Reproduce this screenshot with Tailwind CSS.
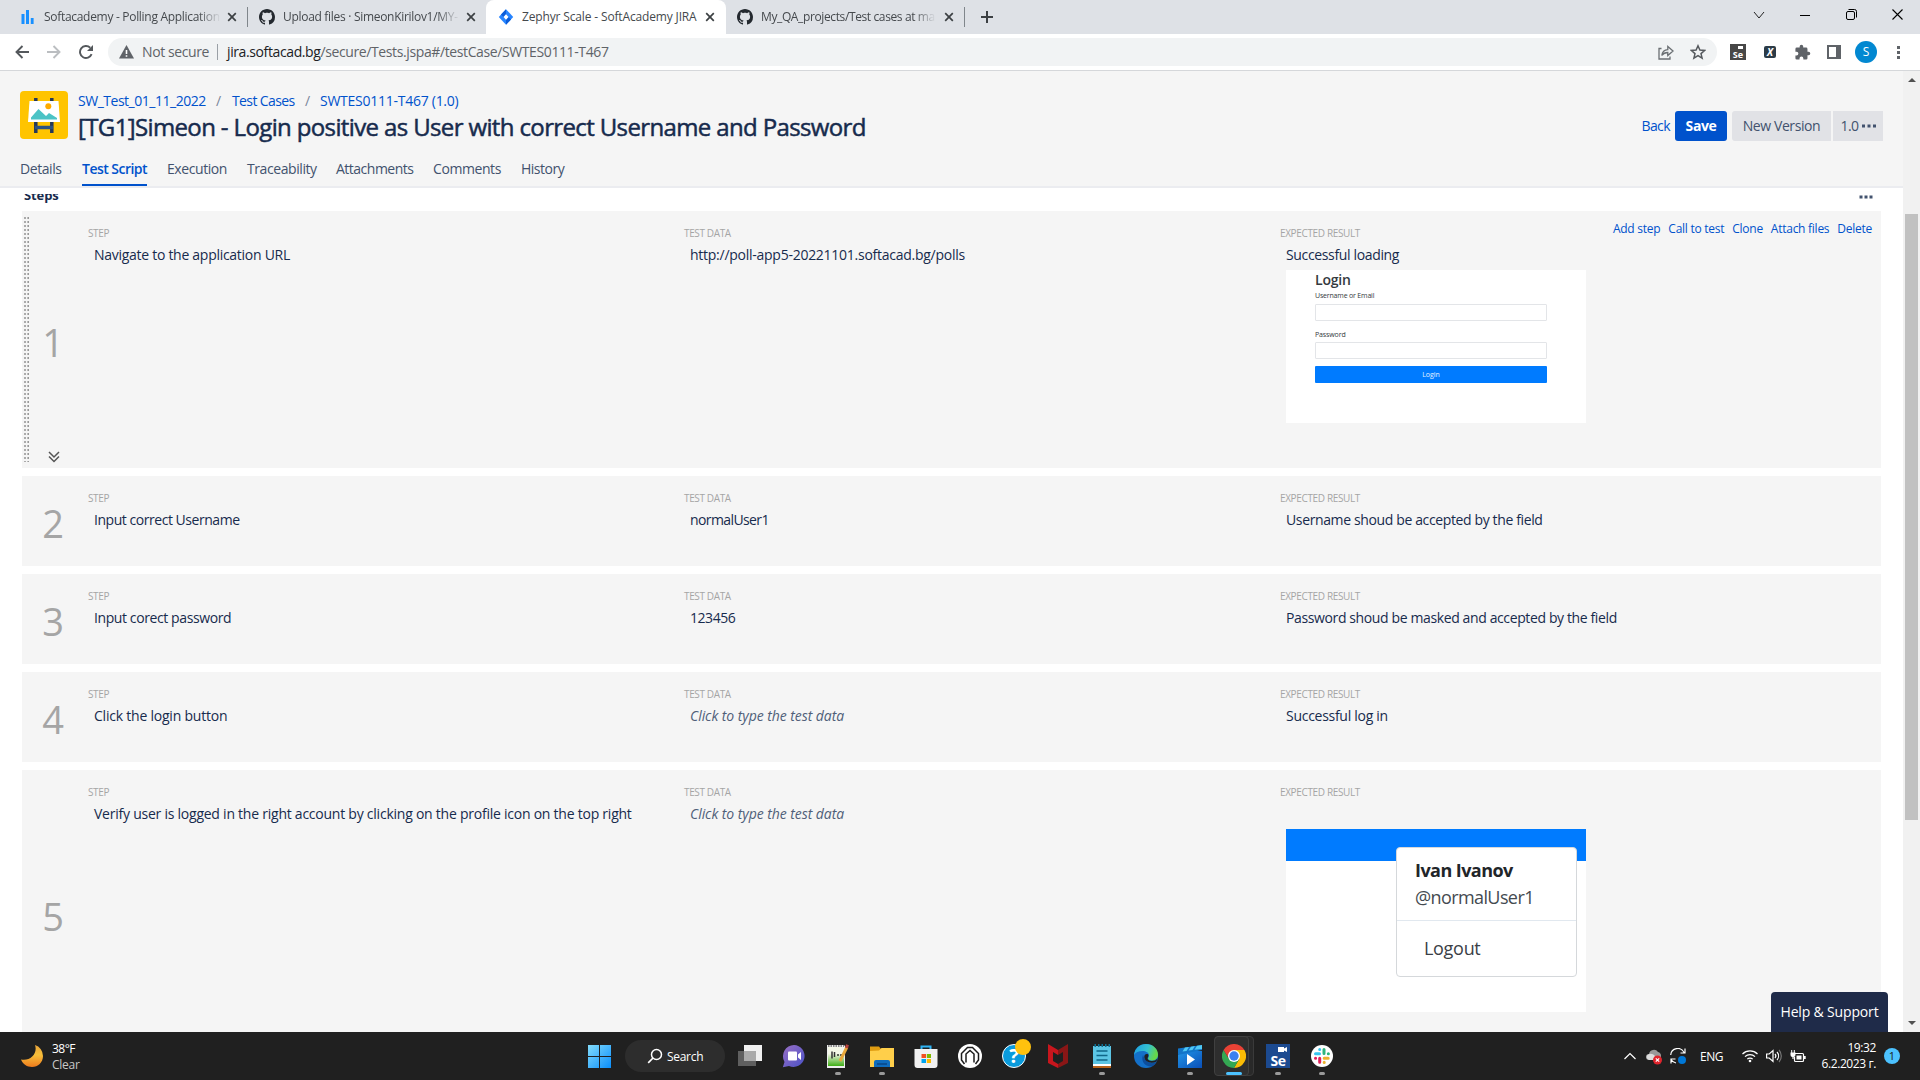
<!DOCTYPE html>
<html lang="en">
<head>
<meta charset="utf-8">
<title>Zephyr Scale - SoftAcademy JIRA</title>
<script src="https://cdn.jsdelivr.net/npm/@tailwindcss/browser@4"></script>
</head>
<body class="w-[1920px] h-[1080px] overflow-hidden flex flex-col bg-white font-['Open_Sans','Noto_Sans',sans-serif] text-sm text-[#172b4d] whitespace-nowrap">

<svg class="hidden">
  <symbol id="gh" viewBox="0 0 16 16"><path fill="#24292f" d="M8 0C3.58 0 0 3.58 0 8c0 3.54 2.29 6.53 5.47 7.59.4.07.55-.17.55-.38 0-.19-.01-.82-.01-1.49-2.01.37-2.53-.49-2.69-.94-.09-.23-.48-.94-.82-1.13-.28-.15-.68-.52-.01-.53.63-.01 1.08.58 1.23.82.72 1.21 1.87.87 2.33.66.07-.52.28-.87.51-1.07-1.78-.2-3.64-.89-3.64-3.95 0-.87.31-1.59.82-2.15-.08-.2-.36-1.02.08-2.12 0 0 .67-.21 2.2.82.64-.18 1.32-.27 2-.27s1.36.09 2 .27c1.53-1.04 2.2-.82 2.2-.82.44 1.1.16 1.92.08 2.12.51.56.82 1.27.82 2.15 0 3.07-1.87 3.75-3.65 3.95.29.25.54.73.54 1.48 0 1.07-.01 1.93-.01 2.2 0 .21.15.46.55.38A8.01 8.01 0 0 0 16 8c0-4.42-3.58-8-8-8z"/></symbol>
  <symbol id="x" viewBox="0 0 10 10"><path d="M1.2 1.2l7.6 7.6M8.8 1.2L1.2 8.8" stroke="#3c4043" stroke-width="1.7" fill="none"/></symbol>
</svg>

<!-- Tab strip -->
<header class="h-[34px] shrink-0 bg-[#dee1e6] flex text-xs text-[#45494d]">
  <div class="w-[247px] h-[34px] flex items-center pl-[21px]">
    <svg class="w-[13px] h-[14px] shrink-0" viewBox="0 0 13 14"><path fill="#1890ff" d="M.5 4h3v10h-3zM5 0h3v14H5zM9.8 8h2.8v6H9.8z"/></svg>
    <span class="ml-[10px] w-[177px] overflow-hidden tracking-[-0.3px] [mask-image:linear-gradient(to_right,black_87%,transparent)]">Softacademy - Polling Application</span>
    <svg class="ml-[6px] w-[10px] h-[10px]"><use href="#x"/></svg>
  </div>
  <div class="w-px h-[20px] mt-[7px] bg-[#80868b]"></div>
  <div class="w-[238px] h-[34px] flex items-center pl-[11px]">
    <svg class="w-4 h-4 shrink-0"><use href="#gh"/></svg>
    <span class="ml-2 w-[177px] overflow-hidden tracking-[-0.3px] [mask-image:linear-gradient(to_right,black_87%,transparent)]">Upload files · SimeonKirilov1/MY-</span>
    <svg class="ml-[6px] w-[10px] h-[10px]"><use href="#x"/></svg>
  </div>
  <div class="w-[240px] h-[34px] flex items-center pl-[12px] bg-white rounded-t-lg">
    <svg class="w-4 h-4 shrink-0" viewBox="0 0 16 16"><path fill="#2684ff" d="M8 .2L15.2 8 8 15.8.8 8z"/><path fill="#0b5cd8" d="M8 .2v5L5.6 8 3 5.500zM8 15.800v-5L10.400 8l2.600 2.500z"/><path fill="#fff" d="M8 5.300L10.500 8 8 10.700 5.500 8z"/></svg>
    <span class="ml-2 w-[178px] overflow-hidden tracking-[-0.15px]">Zephyr Scale - SoftAcademy JIRA</span>
    <svg class="ml-[5px] w-[10px] h-[10px]"><use href="#x"/></svg>
  </div>
  <div class="w-[238px] h-[34px] flex items-center pl-[11px]">
    <svg class="w-4 h-4 shrink-0"><use href="#gh"/></svg>
    <span class="ml-2 w-[175px] overflow-hidden tracking-[-0.38px] [mask-image:linear-gradient(to_right,black_87%,transparent)]">My_QA_projects/Test cases at ma</span>
    <svg class="ml-[8px] w-[10px] h-[10px]"><use href="#x"/></svg>
  </div>
  <div class="w-px h-[20px] mt-[7px] bg-[#80868b]"></div>
  <svg class="ml-[16px] mt-[11px] w-3 h-3" viewBox="0 0 12 12"><path d="M6 0v12M0 6h12" stroke="#3c4043" stroke-width="2"/></svg>
  <div class="ml-auto flex items-center h-[29px]">
    <div class="w-[46px] flex justify-center"><svg class="w-3 h-3" viewBox="0 0 12 12"><path d="M1 3l5 6 5-6" stroke="#222" fill="none"/></svg></div>
    <div class="w-[46px] flex justify-center"><svg class="w-[10px] h-3" viewBox="0 0 10 12"><path d="M0 6.500h10" stroke="#000"/></svg></div>
    <div class="w-[46px] flex justify-center"><svg class="w-[11px] h-[11px]" viewBox="0 0 11 11"><rect x=".5" y="2.500" width="8" height="8" rx="1.500" fill="none" stroke="#000"/><path d="M2.500.5H8.500a2 2 0 0 1 2 2V8.500" fill="none" stroke="#000"/></svg></div>
    <div class="w-[46px] flex justify-center"><svg class="w-[11px] h-[11px]" viewBox="0 0 11 11"><path d="M.5.5l10 10M10.500.5l-10 10" stroke="#000" stroke-width="1.100"/></svg></div>
  </div>
</header>

<!-- Toolbar -->
<div class="h-[37px] shrink-0 bg-white border-b border-[#d5d7da] flex items-center">
  <svg class="ml-[15px] w-[14px] h-[14px]" viewBox="0 0 14 14"><path d="M14 7H1.500M7.500 1L1.500 7l6 6" stroke="#54585c" stroke-width="1.900" fill="none"/></svg>
  <svg class="ml-[18px] w-[14px] h-[14px]" viewBox="0 0 14 14"><path d="M0 7h12.500M6.500 1l6 6-6 6" stroke="#bbbec1" stroke-width="1.900" fill="none"/></svg>
  <svg class="ml-[18px] w-[14px] h-[14px]" viewBox="0 0 14 14"><path d="M12.600 9.200A6 6 0 1 1 11.200 2.700" stroke="#54585c" stroke-width="1.900" fill="none"/><path d="M14 0v6H8z" fill="#54585c"/></svg>
  <div class="ml-[15px] w-[1609px] h-7 rounded-full bg-[#f1f3f4] flex items-center pl-[11px] text-[#5f6368]">
    <svg class="w-[15px] h-[14px]" viewBox="0 0 15 14"><path d="M7.500 0L15 13.500H0z" fill="#5f6368"/><path d="M7.500 5v4M7.500 10.200v1.600" stroke="#fff" stroke-width="1.600"/></svg>
    <span class="ml-[8px] w-[67px] tracking-[-0.4px]">Not secure</span>
    <div class="ml-[8px] w-px h-4 bg-[#9aa0a6]"></div>
    <span class="ml-[9px] tracking-[-0.39px]"><span class="text-[#202124]">jira.softacad.bg</span>/secure/Tests.jspa#/testCase/SWTES0111-T467</span>
    <svg class="ml-auto w-[16px] h-[15px]" viewBox="0 0 16 15"><path d="M3.500 3.500H1V14h11v-2.500" fill="none" stroke="#6b6f73" stroke-width="1.300"/><path d="M3.800 10.500c.5-4 3-5.700 6-5.800V1.500L15 6l-5.200 4.500V7.500c-2.500 0-4.500.8-6 3z" fill="none" stroke="#6b6f73" stroke-width="1.300"/></svg>
    <svg class="ml-[16px] mr-[11px] w-4 h-4" viewBox="0 0 16 16"><path d="M8 1.800l1.900 4.300 4.700.4-3.600 3.100 1.100 4.600L8 11.700l-4.100 2.500L5 9.600 1.400 6.500l4.700-.4z" fill="none" stroke="#55595d" stroke-width="1.500"/></svg>
  </div>
  <div class="ml-[13px] w-4 h-4 bg-[#474747] text-white text-[9px] leading-[21px] font-bold text-center relative">Se<span class="absolute right-[3px] top-[2px] w-[5px] h-[3px] bg-white"></span></div>
  <div class="ml-[18px] w-3 h-3 rounded-[2px] bg-[#2c3b47] text-white text-[10px] leading-[12px] font-bold italic text-center">X</div>
  <svg class="ml-[18px] w-[17px] h-[17px]" viewBox="0 0 24 24"><path fill="#5f6368" d="M20.500 11H19V7a2 2 0 0 0-2-2h-4V3.500a2.500 2.500 0 0 0-5 0V5H4a2 2 0 0 0-2 2v3.800h1.500a2.700 2.700 0 0 1 0 5.400H2V20a2 2 0 0 0 2 2h3.800v-1.500a2.700 2.700 0 0 1 5.400 0V22H17a2 2 0 0 0 2-2v-4h1.500a2.500 2.500 0 0 0 0-5z"/></svg>
  <svg class="ml-[16px] w-[14px] h-[14px]" viewBox="0 0 14 14"><path fill="#5f6368" d="M0 0h14v14H0zM2 2v10h7V2z" fill-rule="evenodd"/></svg>
  <div class="ml-[14px] w-[22px] h-[22px] rounded-full bg-[#0288d1] text-white text-xs leading-[22px] text-center">S</div>
  <svg class="ml-[20px] w-[3px] h-[13px]" viewBox="0 0 3 13"><path fill="#5f6368" d="M0 0h3v3H0zM0 5h3v3H0zM0 10h3v3H0z"/></svg>
</div>

<!-- Page -->
<div class="h-[961px] shrink-0 flex relative">
  <main class="w-[1903px] overflow-hidden">
    <section class="h-[117px] bg-[#f5f5f5] border-b-2 border-[#ebecf0] flex flex-col">
      <div class="flex pt-[20px] pl-[20px] h-[84px]">
        <svg class="w-12 h-12 shrink-0" viewBox="0 0 48 48"><rect width="48" height="48" rx="4" fill="#ffc400"/><path d="M15.800 7v35M31.800 7v35" stroke="#253858" stroke-width="3.500"/><path d="M15 36.500h18" stroke="#2c5282" stroke-width="3.500"/><path d="M9.500 10h29l1.500 21H8z" fill="#fff"/><circle cx="28.300" cy="15.200" r="3" fill="#ffab00"/><path d="M11 28.500v-2l7.500-8.500 7.500 7 3-3 8 5v1.500z" fill="#4bc3c5"/></svg>
        <div class="ml-[10px]">
          <div class="text-[#0052cc] flex leading-5 tracking-[-0.48px]">
            <span class="w-[138px]">SW_Test_01_11_2022</span><span class="w-4 text-[#7a869a]">/</span>
            <span class="w-[73px] tracking-[-0.6px]">Test Cases</span><span class="w-[15px] text-[#7a869a]">/</span>
            <span class="tracking-[-0.26px]">SWTES0111-T467 (1.0)</span>
          </div>
          <h1 class="text-2xl leading-8 tracking-[-0.63px] [-webkit-text-stroke:0.5px_#172b4d]">[TG1]Simeon - Login positive as User with correct Username and Password</h1>
        </div>
        <div class="ml-auto mr-[20px] mt-[20px] h-[30px] flex items-center tracking-[-0.4px] text-[#42526e]">
          <span class="text-[#0052cc] mr-[5px] tracking-[-0.6px]">Back</span>
          <span class="w-[52px] h-[30px] leading-[30px] rounded-[3px] bg-[#0052cc] text-white font-bold text-center">Save</span>
          <span class="ml-[5px] w-[99px] h-[30px] leading-[30px] rounded-l-[3px] bg-[#e1e2e6] text-center">New Version</span>
          <span class="ml-[2px] w-[50px] h-[30px] bg-[#e1e2e6] flex items-center justify-center gap-1 pl-px tracking-[-0.6px]">1.0<svg class="w-[14px] h-[4px]" viewBox="0 0 14 4"><path fill="#42526e" d="M0 .5h3v3H0zM5.500.5h3v3h-3zM11 .5h3v3h-3z"/></svg></span>
        </div>
      </div>
      <nav class="flex pl-[20px] text-[#42526e] leading-[32px] tracking-[-0.42px]">
        <span class="w-[62px]">Details</span>
        <span class="w-[65px] mr-[20px] h-[33px] text-[#0052cc] font-semibold tracking-[-0.53px] border-b-2 border-[#0052cc]">Test Script</span>
        <span class="w-[80px]">Execution</span><span class="w-[89px]">Traceability</span><span class="w-[97px] tracking-[-0.5px]">Attachments</span><span class="w-[88px]">Comments</span><span class="tracking-[-0.5px]">History</span>
      </nav>
    </section>

    <div class="mt-[6px] h-[17px] overflow-hidden flex justify-between pl-[24px] pr-[30px]">
      <h2 class="font-bold text-[13px] leading-5 -mt-[9px] tracking-[-0.1px]">Steps</h2>
      <svg class="w-[14px] h-[4px] mt-[1px]" viewBox="0 0 14 4"><path fill="#42526e" d="M.5.5h3v3h-3zM5.500.5h3v3h-3zM10.500.5h3v3h-3z"/></svg>
    </div>

    <div class="pl-[22px] pr-[22px] flex flex-col gap-2">
      <article class="relative h-[257px] bg-[#f5f5f5] flex">
        <svg class="ml-[2px] mt-[6px] w-[5px] h-[245px]" viewBox="0 0 5 245"><path d="M1 0v245M4.200 0v245" stroke="#999" stroke-width="1.600" stroke-dasharray="2 2"/></svg>
        <div class="w-[59px] pr-[13px] flex flex-col items-center">
          <span class="mt-[103px] ml-[2px] h-[56px] leading-[56px] text-[38px] text-[#a5a5a5]">1</span>
          <svg class="mt-[81px] ml-[4px] w-3 h-3" viewBox="0 0 12 12"><path d="M1 1l5 5 5-5M1 5.500l5 5 5-5" stroke="#555" stroke-width="1.500" fill="none"/></svg>
        </div>
        <div class="w-[596px] pt-[14px]"><div class="text-[10px] leading-4 text-[#a5a5a5] tracking-[-0.36px]">STEP</div><p class="pl-[6px] mt-[4px] tracking-[-0.28px]">Navigate to the application URL</p></div>
        <div class="w-[596px] pt-[14px]"><div class="text-[10px] leading-4 text-[#a5a5a5] tracking-[-0.36px]">TEST DATA</div><p class="pl-[6px] mt-[4px] tracking-[-0.26px]">http://poll-app5-20221101.softacad.bg/polls</p></div>
        <div class="pt-[14px]"><div class="text-[10px] leading-4 text-[#a5a5a5] tracking-[-0.36px]">EXPECTED RESULT</div><p class="pl-[6px] mt-[4px] tracking-[-0.35px]">Successful loading</p>
          <div class="ml-[6px] mt-[5px] w-[300px] h-[153px] bg-white pl-[29px] pr-[39px] pt-[1px] text-[#343a40]">
            <div class="text-[14px] leading-[17px] font-semibold tracking-[-0.2px]">Login</div>
            <div class="text-[7px] leading-[11px] mt-[2px] tracking-[-0.18px]">Username or Email</div>
            <div class="mt-[3px] h-[17px] border border-[#e3e5e8] rounded-[1px]"></div>
            <div class="text-[7px] leading-[11px] mt-[8px] tracking-[-0.12px]">Password</div>
            <div class="mt-[2px] h-[17px] border border-[#e3e5e8] rounded-[1px]"></div>
            <div class="mt-[7px] h-[17px] leading-[17px] rounded-[1px] bg-[#007bff] text-white/90 text-[7px] text-center">Login</div>
          </div>
        </div>
        <div class="absolute right-[9px] top-[10px] flex gap-[8px] text-xs text-[#0052cc] tracking-[-0.26px]"><span>Add step</span><span>Call to test</span><span>Clone</span><span>Attach files</span><span>Delete</span></div>
      </article>

      <article class="h-[90px] bg-[#f5f5f5] flex">
        <div class="w-[66px] pr-1 text-center text-[38px] leading-[94px] text-[#a5a5a5]">2</div>
        <div class="w-[596px] pt-[14px]"><div class="text-[10px] leading-4 text-[#a5a5a5] tracking-[-0.36px]">STEP</div><p class="pl-[6px] mt-[4px] tracking-[-0.46px]">Input correct Username</p></div>
        <div class="w-[596px] pt-[14px]"><div class="text-[10px] leading-4 text-[#a5a5a5] tracking-[-0.36px]">TEST DATA</div><p class="pl-[6px] mt-[4px] tracking-[-0.6px]">normalUser1</p></div>
        <div class="pt-[14px]"><div class="text-[10px] leading-4 text-[#a5a5a5] tracking-[-0.36px]">EXPECTED RESULT</div><p class="pl-[6px] mt-[4px] tracking-[-0.37px]">Username shoud be accepted by the field</p></div>
      </article>

      <article class="h-[90px] bg-[#f5f5f5] flex">
        <div class="w-[66px] pr-1 text-center text-[38px] leading-[94px] text-[#a5a5a5]">3</div>
        <div class="w-[596px] pt-[14px]"><div class="text-[10px] leading-4 text-[#a5a5a5] tracking-[-0.36px]">STEP</div><p class="pl-[6px] mt-[4px] tracking-[-0.4px]">Input corect password</p></div>
        <div class="w-[596px] pt-[14px]"><div class="text-[10px] leading-4 text-[#a5a5a5] tracking-[-0.36px]">TEST DATA</div><p class="pl-[6px] mt-[4px] tracking-[-0.45px]">123456</p></div>
        <div class="pt-[14px]"><div class="text-[10px] leading-4 text-[#a5a5a5] tracking-[-0.36px]">EXPECTED RESULT</div><p class="pl-[6px] mt-[4px] tracking-[-0.38px]">Password shoud be masked and accepted by the field</p></div>
      </article>

      <article class="h-[90px] bg-[#f5f5f5] flex">
        <div class="w-[66px] pr-1 text-center text-[38px] leading-[94px] text-[#a5a5a5]">4</div>
        <div class="w-[596px] pt-[14px]"><div class="text-[10px] leading-4 text-[#a5a5a5] tracking-[-0.36px]">STEP</div><p class="pl-[6px] mt-[4px] tracking-[-0.22px]">Click the login button</p></div>
        <div class="w-[596px] pt-[14px]"><div class="text-[10px] leading-4 text-[#a5a5a5] tracking-[-0.36px]">TEST DATA</div><p class="pl-[6px] mt-[4px] italic text-[#505f79] tracking-[-0.06px]">Click to type the test data</p></div>
        <div class="pt-[14px]"><div class="text-[10px] leading-4 text-[#a5a5a5] tracking-[-0.36px]">EXPECTED RESULT</div><p class="pl-[6px] mt-[4px] tracking-[-0.28px]">Successful log in</p></div>
      </article>

      <article class="h-[292px] bg-[#f5f5f5] flex">
        <div class="w-[66px] pr-1 text-center text-[38px] leading-[292px] text-[#a5a5a5]">5</div>
        <div class="w-[596px] pt-[14px]"><div class="text-[10px] leading-4 text-[#a5a5a5] tracking-[-0.36px]">STEP</div><p class="pl-[6px] mt-[4px] tracking-[-0.24px]">Verify user is logged in the right account by clicking on the profile icon on the top right</p></div>
        <div class="w-[596px] pt-[14px]"><div class="text-[10px] leading-4 text-[#a5a5a5] tracking-[-0.36px]">TEST DATA</div><p class="pl-[6px] mt-[4px] italic text-[#505f79] tracking-[-0.06px]">Click to type the test data</p></div>
        <div class="pt-[14px]"><div class="text-[10px] leading-4 text-[#a5a5a5] tracking-[-0.36px]">EXPECTED RESULT</div>
          <div class="relative ml-[6px] mt-[29px] w-[300px] h-[183px] bg-white text-[#212529]">
            <div class="h-[32px] bg-[#007bff]"></div>
            <div class="absolute left-[110px] top-[18px] w-[181px] h-[130px] bg-white border border-[#d5d8db] rounded-[4px] text-[18px]">
              <div class="h-[73px] border-b border-[#e1e8ef] pl-[18px] pt-[9px] leading-[27px]"><div class="font-bold tracking-[-0.56px]">Ivan Ivanov</div><div class="text-[#444a50] tracking-[-0.6px]">@normalUser1</div></div>
              <div class="pl-[27px] leading-[55px] text-[#3b4046] tracking-[-0.3px]">Logout</div>
            </div>
          </div>
        </div>
      </article>
    </div>
  </main>
  <div class="w-[17px] bg-[#f1f1f1] flex flex-col items-center pt-[7px]">
    <svg class="w-[8px] h-[4px]" viewBox="0 0 8 4"><path d="M4 0l4 4H0z" fill="#505050"/></svg>
    <div class="mt-[132px] w-[13px] h-[606px] bg-[#c1c1c1]"></div>
    <svg class="mt-[201px] w-[8px] h-[4px]" viewBox="0 0 8 4"><path d="M0 0h8L4 4z" fill="#505050"/></svg>
  </div>
  <div class="absolute left-[1771px] bottom-0 w-[117px] h-10 rounded-t-[4px] bg-[#1f2b49] text-white text-center leading-10 tracking-[-0.16px]">Help &amp; Support</div>
</div>

<!-- Taskbar -->
<footer class="h-12 shrink-0 bg-[#202020] flex items-center text-white text-xs">
  <svg class="ml-[21px] w-[22px] h-[22px]" viewBox="0 0 22 22"><defs><linearGradient id="mo" x1="0" y1="0" x2="0" y2="1"><stop offset="0" stop-color="#e8a33a"/><stop offset=".45" stop-color="#f7bf3a"/><stop offset="1" stop-color="#ee7b1d"/></linearGradient></defs><path d="M14 0a11.500 11.500 0 0 1 8 11c0 6.500-5 11-11 11-5 0-9-2.700-11-7.500 9 2 17-5.500 14-14.500z" fill="url(#mo)"/></svg>
  <div class="ml-[9px] w-[536px] leading-4 pt-px"><div class="tracking-[-0.5px]">38°F</div><div class="text-[#c8c8c8] tracking-[-0.25px]">Clear</div></div>
  <svg class="w-[23px] h-[23px]" viewBox="0 0 23 23"><defs><linearGradient id="wi" x1="0" y1="0" x2="1" y2="1"><stop offset="0" stop-color="#83dcfb"/><stop offset="1" stop-color="#0a8efc"/></linearGradient></defs><path fill="url(#wi)" d="M0 0h11v11H0zM12 0h11v11H12zM0 12h11v11H0zM12 12h11v11H12z"/></svg>
  <div class="ml-[14px] w-[100px] h-8 rounded-full bg-[#2d2d2d] flex items-center pl-[22px]">
    <svg class="w-[16px] h-[16px]" viewBox="0 0 16 16"><circle cx="9.500" cy="6.500" r="5" fill="none" stroke="#fff" stroke-width="1.500"/><path d="M6 10l-4.800 4.800" stroke="#fff" stroke-width="1.700"/></svg>
    <span class="ml-[4px] pt-px tracking-[-0.3px]">Search</span>
  </div>
  <div class="ml-[3px] flex h-12">
    <div class="w-11 flex flex-col items-center pt-3"><svg class="w-6 h-6" viewBox="0 0 24 24"><path fill="#5f5f5f" d="M0 7h18v15H0z"/><path fill="#f0f0f0" d="M6 1h18v16H6z"/><path fill="#aaa" d="M6 7h12v10H6z"/></svg></div>
    <div class="w-11 flex flex-col items-center pt-3"><svg class="w-6 h-6" viewBox="0 0 24 24"><defs><linearGradient id="ct" x1="0" y1="0" x2="1" y2="1"><stop offset="0" stop-color="#9a6fc4"/><stop offset="1" stop-color="#4a52c8"/></linearGradient></defs><path fill="url(#ct)" d="M12 1a11 11 0 1 1-5 21L.8 23.200 2.500 18A11.300 11.300 0 0 1 12 1z"/><rect x="6" y="7.500" width="9" height="9" rx="1" fill="#fff"/><path d="M16 10.500l3-2.500v8l-3-2.500z" fill="#fff"/></svg></div>
    <div class="w-11 flex flex-col items-center pt-3"><svg class="w-6 h-6" viewBox="0 0 24 24"><defs><linearGradient id="np" x1="0" y1="0" x2="0" y2="1"><stop offset=".35" stop-color="#f4f7e8"/><stop offset="1" stop-color="#3fae16"/></linearGradient></defs><path fill="#eee" d="M1 1h17l1 1v22H1z"/><path fill="url(#np)" d="M2 3h16v19H2z"/><path d="M2 2h16" stroke="#666" stroke-width="1.500" stroke-dasharray="1.500 1"/><path d="M6 7.500v7M8.500 8v5M11 11h2M14 11h2" stroke="#333" stroke-width="1.500"/><path d="M21 3l-7 14" stroke="#e9a83b" stroke-width="3"/><path d="M21.500.8L20.400 4" stroke="#b6433c" stroke-width="3"/></svg><span class="mt-[4px] w-[6px] h-[3px] rounded-full bg-[#9a9a9a]"></span></div>
    <div class="w-11 flex flex-col items-center pt-3"><svg class="w-6 h-6" viewBox="0 0 24 24"><path fill="#e09d12" d="M0 2.500h9l2 2.500v4H0z"/><path fill="#ffcf4a" d="M0 7l9-.5L11.500 4H24v19H0z"/><path fill="#0f6cbd" d="M4 23v-5q0-2 2-2h12q2 0 2 2v5z"/><path fill="#0a4f94" d="M7 19h10v2H7z"/></svg><span class="mt-[4px] w-[6px] h-[3px] rounded-full bg-[#9a9a9a]"></span></div>
    <div class="w-11 flex flex-col items-center pt-3"><svg class="w-6 h-6" viewBox="0 0 24 24"><path d="M7.500 7V2.500h9V7" stroke="#2fb4f5" stroke-width="2" fill="none"/><path fill="#f1f1f1" d="M.5 5h23v16a3 3 0 0 1-3 3h-17a3 3 0 0 1-3-3z"/><path fill="#f25022" d="M7.500 10H12v4H7.500z"/><path fill="#7fba00" d="M12.800 10H17v4h-4.200z"/><path fill="#00a4ef" d="M7.500 15H12v4H7.500z"/><path fill="#ffb900" d="M12.800 15H17v4h-4.200z"/></svg></div>
    <div class="w-11 flex flex-col items-center pt-3"><svg class="w-6 h-6" viewBox="0 0 24 24"><circle cx="12" cy="12" r="12" fill="#fff"/><path d="M6.500 20L3.500 16V9.500L9.500 3.500h5l6 6V16l-3 4M8 18.500V10l4-3.500 4 3.500v8.500" fill="none" stroke="#1c1c1c" stroke-width="1.500"/></svg></div>
    <div class="w-11 flex flex-col items-center pt-3 relative"><div class="w-6 h-6 rounded-full bg-[#0a9bdc] border-[1.5px] border-white text-[20px] leading-[21px] font-bold text-center">?</div><span class="absolute left-[23px] top-[7px] w-4 h-4 rounded-full bg-[#ffc20e]"></span></div>
    <div class="w-11 flex flex-col items-center pt-3"><svg class="w-6 h-6" viewBox="0 0 24 24"><path fill="#c8161d" d="M2 0l10 6v5L7 8v9l5 3v4L2 19z"/><path fill="#8a1616" d="M22 0L12 6v5l5-3v9l-5 3v4l10-5z"/></svg></div>
    <div class="w-11 flex flex-col items-center pt-3"><svg class="w-6 h-6" viewBox="0 0 24 24"><path fill="#5cc5e4" d="M3 2h18v19H3z"/><path d="M4.500 1.500h16" stroke="#0e6f91" stroke-width="3" stroke-dasharray="1.500 2"/><path d="M6.500 7h11M6.500 11.500h11M6.500 16h11" stroke="#0f6688" stroke-width="1.600"/><path fill="#fff" d="M3 20h18v2H3z"/><path fill="#b8631a" d="M3 22h18v2H3z"/></svg><span class="mt-[4px] w-[6px] h-[3px] rounded-full bg-[#9a9a9a]"></span></div>
    <div class="w-11 flex flex-col items-center pt-3"><svg class="w-6 h-6" viewBox="0 0 24 24"><defs><linearGradient id="ed" x1="0" y1="0" x2="1" y2=".3"><stop offset="0" stop-color="#1b9de2"/><stop offset=".6" stop-color="#35c1d0"/><stop offset="1" stop-color="#66d84a"/></linearGradient></defs><circle cx="12" cy="12" r="12" fill="#1470c8"/><path fill="url(#ed)" d="M0 11C.6 4.500 5.500 0 12 0c7 0 12 5 12 10.500 0 4-3 6-6 6-2.500 0-4-1-4-2 0-.8 1-1.200 1-3C15 8.500 12 7 8.500 7 4.500 7 1.500 8.500 0 11z"/><path fill="#0d4e9c" d="M9 11c-2.500 6 2 12 9 11.500A12 12 0 0 0 22.500 18c-5 2.500-11.500.5-13.500-7z"/><path fill="#202020" d="M13.200 10c1.500.2 1.600 1.500.6 3.500-.8 2 1.400 3.500 4.200 3.500 2.400 0 4-.8 5.500-2.500l-1 3c-5 2.500-11.500 1-12.200-4.500 0-2 1.200-3.200 2.900-3z"/></svg></div>
    <div class="w-11 flex flex-col items-center pt-3"><svg class="w-6 h-6" viewBox="0 0 24 24"><defs><linearGradient id="mv" x1="0" y1="0" x2="1" y2="1"><stop offset="0" stop-color="#2196e8"/><stop offset="1" stop-color="#0a4fb8"/></linearGradient></defs><path fill="url(#mv)" d="M0 11l5-4h19v17H0z"/><path fill="#1275c9" d="M0 4.500L24 1v5L0 11z"/><path fill="#4fc8f4" d="M7 3.500l4-.6L8.500 7l-4 .5zM13 2.700l4-.6L14.500 6l-4 .6zM19 1.800l5-.8v4l-7.500.8z"/><path fill="#fff" d="M9 10l8 5.500L9 21z"/></svg><span class="mt-[4px] w-[6px] h-[3px] rounded-full bg-[#9a9a9a]"></span></div>
    <div class="w-11 flex flex-col items-center pt-3 relative"><span class="absolute left-[3px] top-1 w-[39px] h-10 rounded-[4px] bg-[#292929] border border-[#3a3a3a]"></span><span class="absolute left-[2px] top-1 w-[35px] h-10 rounded-[4px] bg-[#2e2e2e] border border-[#404040]"></span><svg class="w-6 h-6 relative" viewBox="0 0 24 24"><path fill="#fbbc05" d="M12 6h10.400A12 12 0 0 1 12 24l5.200-9z"/><path fill="#34a853" d="M1.600 6A12 12 0 0 0 12 24l5.200-9-5.200 2-5-2z"/><path fill="#e94235" d="M1.600 6A12 12 0 0 1 22.400 6H12L7 9.500l-.8 4z"/><circle cx="12" cy="12" r="6" fill="#fff"/><circle cx="12" cy="12" r="4.700" fill="#3b80f0"/></svg><span class="relative mt-[4px] w-4 h-[3px] rounded-full bg-[#4cc2ff]"></span></div>
    <div class="w-11 flex flex-col items-center pt-3"><div class="relative w-6 h-6 bg-[#1c4a90] font-bold text-[14px] leading-[33px] text-center tracking-[-0.5px]">Se<svg class="absolute left-[12px] top-[3px] w-[9px] h-[5px]" viewBox="0 0 9 5"><path fill="#fff" d="M0 0h6v1.500L9 0v5L6 3.500V5H0z"/></svg></div><span class="mt-[4px] w-[6px] h-[3px] rounded-full bg-[#9a9a9a]"></span></div>
    <div class="w-11 flex flex-col items-center pt-3"><svg class="w-6 h-6" viewBox="0 0 24 24"><circle cx="12" cy="12" r="11" fill="#fff"/><g stroke-width="3" stroke-linecap="round"><path stroke="#36c5f0" d="M5.500 9.700h4M9.700 5.500v.1"/><path stroke="#2eb67d" d="M14 5.500v4M18.300 9.700h.1"/><path stroke="#ecb22e" d="M14.200 14.200h4M14.200 18.300v.1"/><path stroke="#e01e5a" d="M9.700 14.200v4M5.500 14.200h.1"/></g></svg><span class="mt-[4px] w-[6px] h-[3px] rounded-full bg-[#9a9a9a]"></span></div>
  </div>
  <div class="ml-auto flex items-center">
    <svg class="w-3 h-3" viewBox="0 0 12 12"><path d="M.5 9L6 3.500 11.500 9" stroke="#fff" stroke-width="1.200" fill="none"/></svg>
    <svg class="ml-[10px] w-4 h-4 mt-[2px]" viewBox="0 0 16 16"><path fill="#999" d="M3 11a3 3 0 0 1 0-6 5 5 0 0 1 9-2 4 4 0 0 1 3 4v4z"/><path fill="#ddd" d="M3 11a3 3 0 0 1-1-5.500C5 4 7 5 9 7v4z"/><circle cx="11.500" cy="11" r="4.500" fill="#e0242c"/><path d="M9.800 9.300l3.400 3.400M13.200 9.300l-3.400 3.400" stroke="#fff" stroke-width="1.200"/></svg>
    <svg class="ml-[8px] w-4 h-4" viewBox="0 0 16 16"><path d="M.7 7A7 7 0 0 1 14 4.500M15 .5v4.500h-4.500M5 15.500M1 15.500V11h4.500M1 11.500a7 7 0 0 0 5 3.500" stroke="#fff" fill="none" stroke-width="1.200"/><circle cx="12" cy="12" r="4" fill="#0078d7"/></svg>
    <span class="ml-[14px] w-[24px] pt-px tracking-[-0.5px]">ENG</span>
    <svg class="ml-[18px] w-4 h-[14px]" viewBox="0 0 16 14"><path d="M.5 5a10.500 10.500 0 0 1 15 0M3 7.700a7 7 0 0 1 10 0M5.300 10.200a3.800 3.800 0 0 1 5.400 0" stroke="#fff" stroke-width="1.200" fill="none"/><circle cx="8" cy="12" r="1.300" fill="#fff"/></svg>
    <svg class="ml-[8px] w-4 h-[14px]" viewBox="0 0 16 14"><path d="M.6 5v4h2.600L7 12.500v-11L3.200 5z" stroke="#fff" stroke-width="1.200" fill="none"/><path d="M9 5a3 3 0 0 1 0 4M11 3a6 6 0 0 1 0 8" stroke="#fff" stroke-width="1.200" fill="none"/><path d="M13 1a9 9 0 0 1 0 12" stroke="#777" stroke-width="1.200" fill="none"/></svg>
    <svg class="ml-[8px] w-4 h-[13px]" viewBox="0 0 16 13"><path d="M5 3.500h7.500a1 1 0 0 1 1 1v6a1 1 0 0 1-1 1h-7a1 1 0 0 1-1-1V7" stroke="#fff" stroke-width="1.200" fill="none"/><path fill="#fff" d="M6.500 5.500h5v4h-5zM14 6h1.700v3H14zM.5 2.500h5V5a2 2 0 0 1-1.900 2v2H2.400V7A2 2 0 0 1 .5 5zM1.200 0h1v2.500h-1zM3.800 0h1v2.500h-1z"/></svg>
    <div class="w-[70px] text-right leading-4 tracking-[-0.4px]"><div>19:32</div><div>6.2.2023 г.</div></div>
    <div class="ml-[8px] mr-[20px] w-4 h-4 rounded-full bg-[#4cc2ff] text-[#1b1b1b] text-[11px] leading-4 text-center">1</div>
  </div>
</footer>
</body>
</html>
